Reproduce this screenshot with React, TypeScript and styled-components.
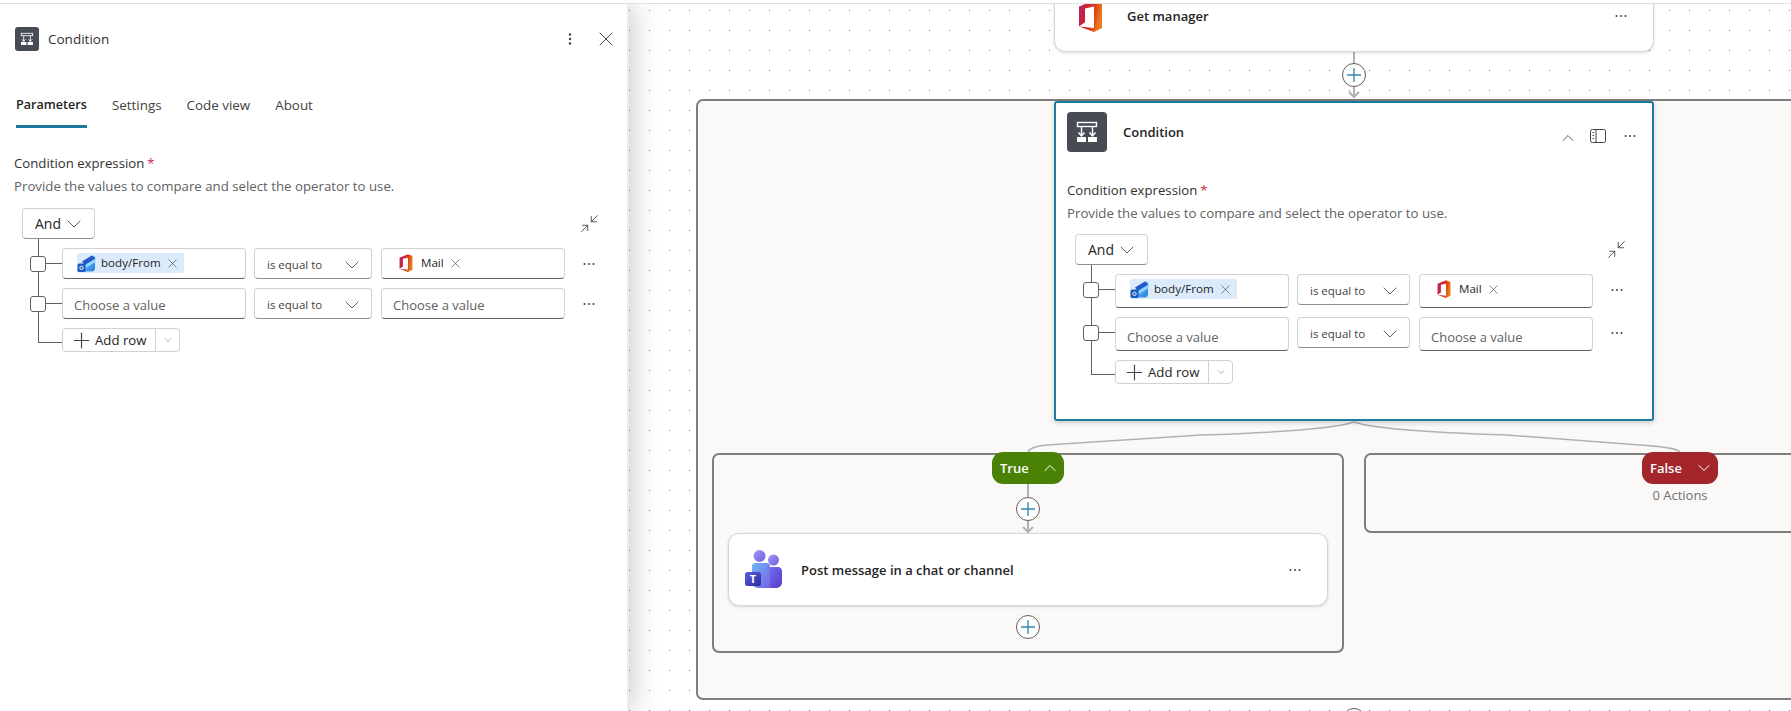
import React from 'react';
import styled, { createGlobalStyle } from 'styled-components';
import { ChevronDown, ChevronUp, Minimize2, Plus, X } from 'lucide-react';

const GlobalStyle = createGlobalStyle`
  html, body {
    margin: 0;
    padding: 0;
    background: #fff;
  }
  body {
    font-family: "Open Sans", "Noto Sans", Arial, sans-serif;
    font-size: 14px;
    color: #242424;
    -webkit-font-smoothing: antialiased;
  }
`;

const Page = styled.div`
  width: 1791px;
  height: 711px;
  display: flex;
  flex-direction: column;
  overflow: hidden;
`;

const TopBar = styled.div`
  height: 3px;
  flex: none;
  background: #fff;
  border-bottom: 1px solid #e0e0e0;
  position: relative;
  z-index: 3;
`;

const Main = styled.div`
  flex: 1;
  display: flex;
  min-height: 0;
`;

const Panel = styled.aside`
  width: 629px;
  margin-right: -1px;
  flex: none;
  padding: 23px 15px 0 14px;
  box-sizing: border-box;
  background: #fff;
  border-right: 2px solid #ececec;
  box-shadow: 0 0 30px rgba(0, 0, 0, 0.26);
  position: relative;
  z-index: 2;
`;

const PanelHeader = styled.header`
  display: flex;
  align-items: center;
  padding-left: 1px;
  height: 24px;
`;

const PanelTitle = styled.span`
  margin-left: 9px;
  font-size: 13.5px;
  font-weight: 500;
  color: #323130;
`;

const PanelActions = styled.div`
  margin-left: auto;
  display: flex;
  align-items: center;
  gap: 17px;
  margin-right: -6px;
  color: #424242;
`;

const Tabs = styled.nav`
  display: flex;
  gap: 25px;
  margin: 44px 0 0 2px;
`;

const Tab = styled.div<{ $active?: boolean }>`
  height: 30px;
  line-height: 20px;
  font-size: ${({ $active }) => ($active ? 12.6 : 13.4)}px;
  font-weight: ${({ $active }) => ($active ? 600 : 400)};
  color: ${({ $active }) => ($active ? '#242424' : '#424242')};
  border-bottom: 3px solid ${({ $active }) => ($active ? '#1b7a9e' : 'transparent')};
`;

const PanelBody = styled.div`
  margin-top: 25px;
`;

const Canvas = styled.main`
  flex: 1;
  position: relative;
  overflow: hidden;
  background-color: #fff;
  background-image: radial-gradient(circle at 1.5px 1.5px, #7d7d7d 0.7px, transparent 0.9px);
  background-size: 20px 20px;
  background-position: 0 5px;
`;

const Wires = styled.svg`
  position: absolute;
  left: 0;
  top: 0;
  width: 100%;
  height: 100%;
  z-index: 1;
  pointer-events: none;
`;

const Scope = styled.div<{ $x: number; $y: number; $w: number; $h: number }>`
  position: absolute;
  left: ${({ $x }) => $x}px;
  top: ${({ $y }) => $y}px;
  width: ${({ $w }) => $w}px;
  height: ${({ $h }) => $h}px;
  box-sizing: border-box;
  background: #faf9f8;
  border: 2px solid #807e7c;
  border-radius: 7px;
`;

const Node = styled.section<{ $x: number; $y: number; $h: number }>`
  position: absolute;
  left: ${({ $x }) => $x}px;
  top: ${({ $y }) => $y}px;
  width: 600px;
  height: ${({ $h }) => $h}px;
  box-sizing: border-box;
  background: #fff;
  border: 1px solid #d6d6d6;
  border-radius: 11px;
  box-shadow: 0 1px 3px rgba(0, 0, 0, 0.14);
  display: flex;
  align-items: center;
  z-index: 2;
`;

const NodeLogo = styled.span<{ $left: number; $right: number }>`
  margin: 0 ${({ $right }) => $right}px 0 ${({ $left }) => $left}px;
  display: flex;
`;

const NodeName = styled.span`
  font-size: 13px;
  font-weight: 600;
  color: #242424;
`;

const NodeMenu = styled.span`
  margin-left: auto;
  margin-right: 25px;
  display: flex;
  color: #424242;
`;

const SelectedNode = styled.section`
  position: absolute;
  left: 426px;
  top: 97px;
  width: 600px;
  height: 320px;
  box-sizing: border-box;
  padding: 9px 11px 0;
  background: #fff;
  border: 2px solid #1b7a9e;
  border-radius: 3px;
  box-shadow: 0 2px 5px rgba(0, 0, 0, 0.18);
  z-index: 2;
`;

const SelectedHead = styled.header`
  display: flex;
  height: 40px;
`;

const SelectedTitle = styled.span`
  margin: 10px 0 0 16px;
  line-height: 20px;
  font-size: 13px;
  font-weight: 600;
`;

const SelectedTools = styled.div`
  margin: 16px 4px 0 auto;
  height: 16px;
  display: flex;
  align-items: center;
  gap: 17px;
  color: #424242;
`;

const CollapseToggle = styled.span`
  display: flex;
  margin: 4px -5px 0 0;
`;

const SelectedBody = styled.div`
  margin-top: 28px;
`;

const Pill = styled.div<{ $x: number; $w: number; $bg: string }>`
  position: absolute;
  left: ${({ $x }) => $x}px;
  top: 448px;
  width: ${({ $w }) => $w}px;
  height: 32px;
  box-sizing: border-box;
  padding: 0 4px 0 8px;
  border-radius: 11px;
  background: ${({ $bg }) => $bg};
  color: #fff;
  font-size: 13px;
  font-weight: 600;
  display: flex;
  align-items: center;
  justify-content: space-between;
  z-index: 2;
`;

const EmptyNote = styled.div`
  position: absolute;
  left: 1012px;
  top: 481px;
  width: 80px;
  text-align: center;
  line-height: 20px;
  font-size: 13px;
  color: #707070;
`;

const AddButton = styled.button<{ $x: number; $y: number }>`
  position: absolute;
  left: ${({ $x }) => $x}px;
  top: ${({ $y }) => $y}px;
  width: 24px;
  height: 24px;
  padding: 0;
  margin: -12px 0 0 -12px;
  display: flex;
  align-items: center;
  justify-content: center;
  border: 1px solid #605e5c;
  border-radius: 50%;
  background: #fff;
  color: #3489ad;
  z-index: 2;
`;

const Label = styled.div`
  line-height: 20px;
  font-size: 13.2px;
  color: #323130;
`;

const Required = styled.span`
  margin-left: 3px;
  color: #c4314b;
`;

const Helper = styled.div`
  margin-top: 3px;
  line-height: 20px;
  font-size: 13.25px;
  color: #616161;
`;

const GroupRow = styled.div<{ $width: number; $top: number }>`
  margin: ${({ $top }) => $top}px 0 0 8px;
  width: ${({ $width }) => $width}px;
  display: flex;
  align-items: center;
  justify-content: space-between;
`;

const AndButton = styled.div`
  width: 73px;
  height: 31px;
  box-sizing: border-box;
  padding: 0 8px 0 12px;
  display: flex;
  align-items: center;
  justify-content: space-between;
  border: 1px solid #d1d1d1;
  border-bottom-color: #8f8f8f;
  border-radius: 4px;
  background: #fff;
  font-size: 14px;
  color: #242424;

  svg {
    color: #616161;
  }
`;

const Tree = styled.div`
  position: relative;
  margin-top: 9px;
  display: flex;
  flex-direction: column;
  gap: 9px;

  &::before {
    content: '';
    position: absolute;
    left: 24px;
    top: -9px;
    bottom: 9px;
    width: 1px;
    background: #616161;
  }
`;

const Row = styled.div`
  position: relative;
  display: flex;
  align-items: flex-start;
  padding-left: 16px;
`;

const Check = styled.span`
  position: relative;
  width: 16px;
  height: 16px;
  box-sizing: border-box;
  margin: 8px 16px 0 0;
  border: 1px solid #616161;
  border-radius: 3px;
  background: #fff;
  flex: none;

  &::after {
    content: '';
    position: absolute;
    left: 15px;
    top: 6px;
    width: 16px;
    height: 1px;
    background: #616161;
  }
`;

const Field = styled.div<{ $w: number; $h: number; $gap?: number; $empty?: boolean }>`
  width: ${({ $w }) => $w}px;
  height: ${({ $h }) => $h}px;
  margin-right: ${({ $gap = 9 }) => $gap}px;
  box-sizing: border-box;
  flex: none;
  padding: ${({ $empty }) => ($empty ? '0 0 3px 11px' : '4px 0 0 14px')};
  display: flex;
  align-items: ${({ $empty }) => ($empty ? 'flex-end' : 'flex-start')};
  border: 1px solid #d1d1d1;
  border-bottom-color: #616161;
  border-radius: 4px;
  background: #fff;
  line-height: 20px;
  font-size: 13px;
  color: #616161;
  position: relative;
  z-index: 1;
`;

const Token = styled.span<{ $tinted?: boolean }>`
  height: 20px;
  display: flex;
  align-items: center;
  padding: ${({ $tinted }) => ($tinted ? '0 4px 0 0' : '0 0 0 3px')};
  background: ${({ $tinted }) => ($tinted ? '#dcebf9' : 'transparent')};
  border-radius: 2px;
  font-size: 11.6px;
  color: #242424;
  gap: ${({ $tinted }) => ($tinted ? 5 : 8)}px;
`;

const TokenClose = styled.span<{ $shift: number }>`
  display: flex;
  margin-left: ${({ $shift }) => $shift}px;
  color: #424242;
`;

const Operator = styled.div<{ $w: number; $h: number }>`
  width: ${({ $w }) => $w}px;
  height: ${({ $h }) => $h}px;
  margin-right: 9px;
  box-sizing: border-box;
  flex: none;
  padding: 2px 7px 0 12px;
  display: flex;
  align-items: center;
  justify-content: space-between;
  border: 1px solid #d1d1d1;
  border-bottom-color: #8f8f8f;
  border-radius: 4px;
  background: #fff;
  font-size: 11.5px;
  color: #424242;

  svg {
    color: #616161;
  }
`;

const RowMenu = styled.span`
  width: 14px;
  height: 31px;
  margin-left: 8px;
  display: flex;
  align-items: center;
  justify-content: center;
  color: #424242;
`;

const AddRow = styled.div`
  position: relative;
  width: 118px;
  height: 24px;
  margin-left: 48px;
  box-sizing: border-box;
  display: flex;
  border: 1px solid #d1d1d1;
  border-radius: 4px;
  background: #fff;
  font-size: 13.2px;
  color: #242424;

  &::before {
    content: '';
    position: absolute;
    left: -25px;
    top: 13px;
    width: 24px;
    height: 1px;
    background: #616161;
  }
`;

const AddRowMain = styled.span`
  width: 93px;
  box-sizing: border-box;
  padding-left: 6px;
  display: flex;
  align-items: center;
  gap: 1px;
  border-right: 1px solid #d1d1d1;

  svg {
    color: #424242;
  }
`;

const AddRowMore = styled.span`
  flex: 1;
  display: flex;
  align-items: center;
  justify-content: center;
  color: #616161;
`;

const IconTile = styled.span<{ $size: number }>`
  width: ${({ $size }) => $size}px;
  height: ${({ $size }) => $size}px;
  border-radius: ${({ $size }) => ($size > 30 ? 4 : 3)}px;
  background: #474b54;
  display: flex;
  flex: none;
`;

const Dots = ({ vertical = false }: { vertical?: boolean }) => (
  <svg width="14" height="14" viewBox="0 0 14 14" fill="currentColor" style={vertical ? { transform: 'rotate(90deg)' } : undefined}>
    <circle cx="2.5" cy="7" r={vertical ? 1.2 : 1} />
    <circle cx="7" cy="7" r={vertical ? 1.2 : 1} />
    <circle cx="11.5" cy="7" r={vertical ? 1.2 : 1} />
  </svg>
);

const ConditionGlyph = ({ size }: { size: number }) => (
  <svg width={size} height={size} viewBox="0 0 40 40" fill="none" stroke="#fff" strokeWidth="1.4">
    <rect x="10.5" y="10.5" width="19" height="4" />
    <path d="M14.5 15v9M25.5 15v9M11.5 20.5l3 3.5 3-3.5M22.5 20.5l3 3.5 3-3.5" />
    <rect x="10" y="25" width="9" height="5" fill="#fff" stroke="none" />
    <rect x="21" y="25" width="9" height="5" fill="#fff" stroke="none" />
  </svg>
);

const OfficeLogo = ({ width, height, id }: { width: number; height: number; id: string }) => (
  <svg width={width} height={height} viewBox="0 0 25 32" style={{ flex: 'none' }}>
    <defs>
      <linearGradient id={id} x1="0" y1="0" x2="1" y2="0.25">
        <stop offset="0" stopColor="#a5307e" />
        <stop offset="0.3" stopColor="#cc1f3a" />
        <stop offset="0.7" stopColor="#dc3e15" />
        <stop offset="1" stopColor="#ea7a1f" />
      </linearGradient>
    </defs>
    <path d="M1 6.5 16 .5l8 3v24.6L16 32 1 26.4l15 1.6V6.6L7 8.6v13.6l-6 4.2z" fill={`url(#${id})`} />
  </svg>
);

const OutlookLogo = () => (
  <svg width="19" height="19" viewBox="0 0 19 19" style={{ flex: 'none' }}>
    <defs>
      <linearGradient id="olk" x1="0" y1="0" x2="1" y2="1">
        <stop offset="0" stopColor="#6fd0f6" />
        <stop offset="1" stopColor="#2a7be4" />
      </linearGradient>
    </defs>
    <path d="M6 8 13 2.5c2-1.4 4-1 5 .5v11c0 2.4-1.4 3.6-3.4 3.6H6z" fill="url(#olk)" />
    <path d="M5 7.5 15 1.5l3.5 3L8 11z" fill="#2358c8" />
    <path d="M8 11 18.5 4.5V8L9 14z" fill="#8fd6fa" />
    <rect x="0.5" y="9.5" width="8" height="8.5" rx="1.5" fill="#1a5bbf" />
    <circle cx="4.5" cy="13.8" r="1.7" fill="none" stroke="#fff" strokeWidth="1" />
  </svg>
);

const TeamsLogo = () => (
  <svg width="37" height="39" viewBox="0 0 37 39" style={{ flex: 'none' }}>
    <defs>
      <linearGradient id="tmBack" x1="0" y1="0" x2="1" y2="1">
        <stop offset="0" stopColor="#7d6cf2" />
        <stop offset="1" stopColor="#4f3fc6" />
      </linearGradient>
      <linearGradient id="tmFront" x1="0" y1="0" x2="1" y2="1">
        <stop offset="0" stopColor="#6fb7f7" />
        <stop offset="1" stopColor="#7560e6" />
      </linearGradient>
      <linearGradient id="tmTile" x1="0" y1="0" x2="1" y2="1">
        <stop offset="0" stopColor="#5b62e0" />
        <stop offset="1" stopColor="#2b2a9e" />
      </linearGradient>
      <linearGradient id="tmHead" x1="0" y1="0" x2="1" y2="1">
        <stop offset="0" stopColor="#a896f7" />
        <stop offset="1" stopColor="#6c61e2" />
      </linearGradient>
    </defs>
    <circle cx="14.5" cy="6" r="6" fill="url(#tmHead)" />
    <circle cx="28.5" cy="10" r="5.5" fill="url(#tmHead)" />
    <path d="M23 17h10c2.2 0 4 1.8 4 4v11c0 3.6-2.6 6-6 6h-6z" fill="url(#tmBack)" />
    <path d="M7 16c0-1.6 1.4-3 3-3h12c1.6 0 3 1.4 3 3v22h-12c-3.4 0-6-2.8-6-6z" fill="url(#tmFront)" />
    <rect x="0" y="22" width="16" height="14" rx="2.5" fill="url(#tmTile)" />
    <text x="8" y="33.2" textAnchor="middle" fontSize="11" fontWeight="700" fontFamily="Open Sans, sans-serif" fill="#fff">T</text>
  </svg>
);

const PanelToggle = () => (
  <svg width="16" height="16" viewBox="0 0 16 16" fill="none" stroke="currentColor">
    <rect x="0.5" y="1.5" width="15" height="13" rx="2" />
    <path d="M6 2v12M2.5 4.5h1.5M2.5 7.5h1.5M2.5 10.5h1.5" />
  </svg>
);

type FieldSizes = {
  value: number;
  op: number;
  valueH: number;
  opH: number;
  groupW: number;
  groupTop: number;
  firstGap: number;
};

const panelSizes: FieldSizes = { value: 184, op: 118, valueH: 31, opH: 31, groupW: 578, groupTop: 12, firstGap: 8 };
const nodeSizes: FieldSizes = { value: 174, op: 113, valueH: 34, opH: 31, groupW: 552, groupTop: 11, firstGap: 8 };

const ConditionFields = ({ sizes, idPrefix }: { sizes: FieldSizes; idPrefix: string }) => (
  <>
    <Label>
      Condition expression<Required>*</Required>
    </Label>
    <Helper>Provide the values to compare and select the operator to use.</Helper>
    <GroupRow $width={sizes.groupW} $top={sizes.groupTop}>
      <AndButton>
        And
        <ChevronDown size={24} strokeWidth={1} />
      </AndButton>
      <Minimize2 size={21} strokeWidth={1} color="#424242" />
    </GroupRow>
    <Tree>
      <Row>
        <Check />
        <Field $w={sizes.value} $h={sizes.valueH} $gap={sizes.firstGap}>
          <Token $tinted>
            <OutlookLogo />
            body/From
            <TokenClose $shift={-1}>
              <X size={15} strokeWidth={1} />
            </TokenClose>
          </Token>
        </Field>
        <Operator $w={sizes.op} $h={sizes.opH}>
          is equal to
          <ChevronDown size={24} strokeWidth={1} />
        </Operator>
        <Field $w={sizes.value} $h={sizes.valueH}>
          <Token>
            <OfficeLogo width={14} height={18} id={`${idPrefix}-mail`} />
            Mail
            <TokenClose $shift={-4}>
              <X size={15} strokeWidth={1} />
            </TokenClose>
          </Token>
        </Field>
        <RowMenu>
          <Dots />
        </RowMenu>
      </Row>
      <Row>
        <Check />
        <Field $w={sizes.value} $h={sizes.valueH} $gap={sizes.firstGap} $empty>
          Choose a value
        </Field>
        <Operator $w={sizes.op} $h={sizes.opH}>
          is equal to
          <ChevronDown size={24} strokeWidth={1} />
        </Operator>
        <Field $w={sizes.value} $h={sizes.valueH} $empty>
          Choose a value
        </Field>
        <RowMenu>
          <Dots />
        </RowMenu>
      </Row>
      <AddRow>
        <AddRowMain>
          <Plus size={25} strokeWidth={1.1} />
          Add row
        </AddRowMain>
        <AddRowMore>
          <ChevronDown size={12} strokeWidth={1} />
        </AddRowMore>
      </AddRow>
    </Tree>
  </>
);

const WIRE = '#b3b0b5';

export default function App() {
  return (
    <Page>
      <GlobalStyle />
      <TopBar />
      <Main>
        <Panel>
          <PanelHeader>
            <IconTile $size={24}>
              <ConditionGlyph size={24} />
            </IconTile>
            <PanelTitle>Condition</PanelTitle>
            <PanelActions>
              <Dots vertical />
              <X size={24} strokeWidth={1} />
            </PanelActions>
          </PanelHeader>
          <Tabs>
            <Tab $active>Parameters</Tab>
            <Tab>Settings</Tab>
            <Tab>Code view</Tab>
            <Tab>About</Tab>
          </Tabs>
          <PanelBody>
            <ConditionFields sizes={panelSizes} idPrefix="panel" />
          </PanelBody>
        </Panel>

        <Canvas>
          <Scope $x={68} $y={95} $w={1135} $h={601} />
          <Scope $x={84} $y={449} $w={632} $h={200} />
          <Scope $x={736} $y={449} $w={500} $h={80} />

          <Wires viewBox="0 0 1163 707" fill="none" stroke={WIRE}>
            <g strokeWidth="2">
              <path d="M726 46v14M726 83v10M721 88l5 5 5-5" />
              <path d="M400 478v15M400 516v12M395 523l5 5 5-5" />
            </g>
            <g strokeWidth="1.5">
              <path d="M726 418Q700 427 573 431L419 441C408 442 400 445 400 449" />
              <path d="M726 418Q752 427 879 431L1012 441C1040 443 1052 445 1052 449" />
            </g>
          </Wires>

          <Node $x={426} $y={-24} $h={72}>
            <NodeLogo $left={23} $right={24}>
              <OfficeLogo width={25} height={32} id="node-office" />
            </NodeLogo>
            <NodeName>Get manager</NodeName>
            <NodeMenu>
              <Dots />
            </NodeMenu>
          </Node>

          <AddButton $x={726} $y={71}>
            <Plus size={22} strokeWidth={1.5} />
          </AddButton>

          <SelectedNode>
            <SelectedHead>
              <IconTile $size={40}>
                <ConditionGlyph size={40} />
              </IconTile>
              <SelectedTitle>Condition</SelectedTitle>
              <SelectedTools>
                <CollapseToggle>
                  <ChevronUp size={20} strokeWidth={1} />
                </CollapseToggle>
                <PanelToggle />
                <Dots />
              </SelectedTools>
            </SelectedHead>
            <SelectedBody>
              <ConditionFields sizes={nodeSizes} idPrefix="node" />
            </SelectedBody>
          </SelectedNode>

          <Pill $x={364} $w={72} $bg="#498205">
            True
            <ChevronUp size={20} strokeWidth={1.2} />
          </Pill>
          <Pill $x={1014} $w={76} $bg="#a4262c">
            False
            <ChevronDown size={20} strokeWidth={1.2} />
          </Pill>
          <EmptyNote>0 Actions</EmptyNote>

          <AddButton $x={400} $y={505}>
            <Plus size={22} strokeWidth={1.5} />
          </AddButton>

          <Node $x={100} $y={529} $h={73}>
            <NodeLogo $left={16} $right={19}>
              <TeamsLogo />
            </NodeLogo>
            <NodeName>Post message in a chat or channel</NodeName>
            <NodeMenu>
              <Dots />
            </NodeMenu>
          </Node>

          <AddButton $x={400} $y={623}>
            <Plus size={22} strokeWidth={1.5} />
          </AddButton>
          <AddButton $x={726} $y={716}>
            <Plus size={22} strokeWidth={1.5} />
          </AddButton>
        </Canvas>
      </Main>
    </Page>
  );
}
